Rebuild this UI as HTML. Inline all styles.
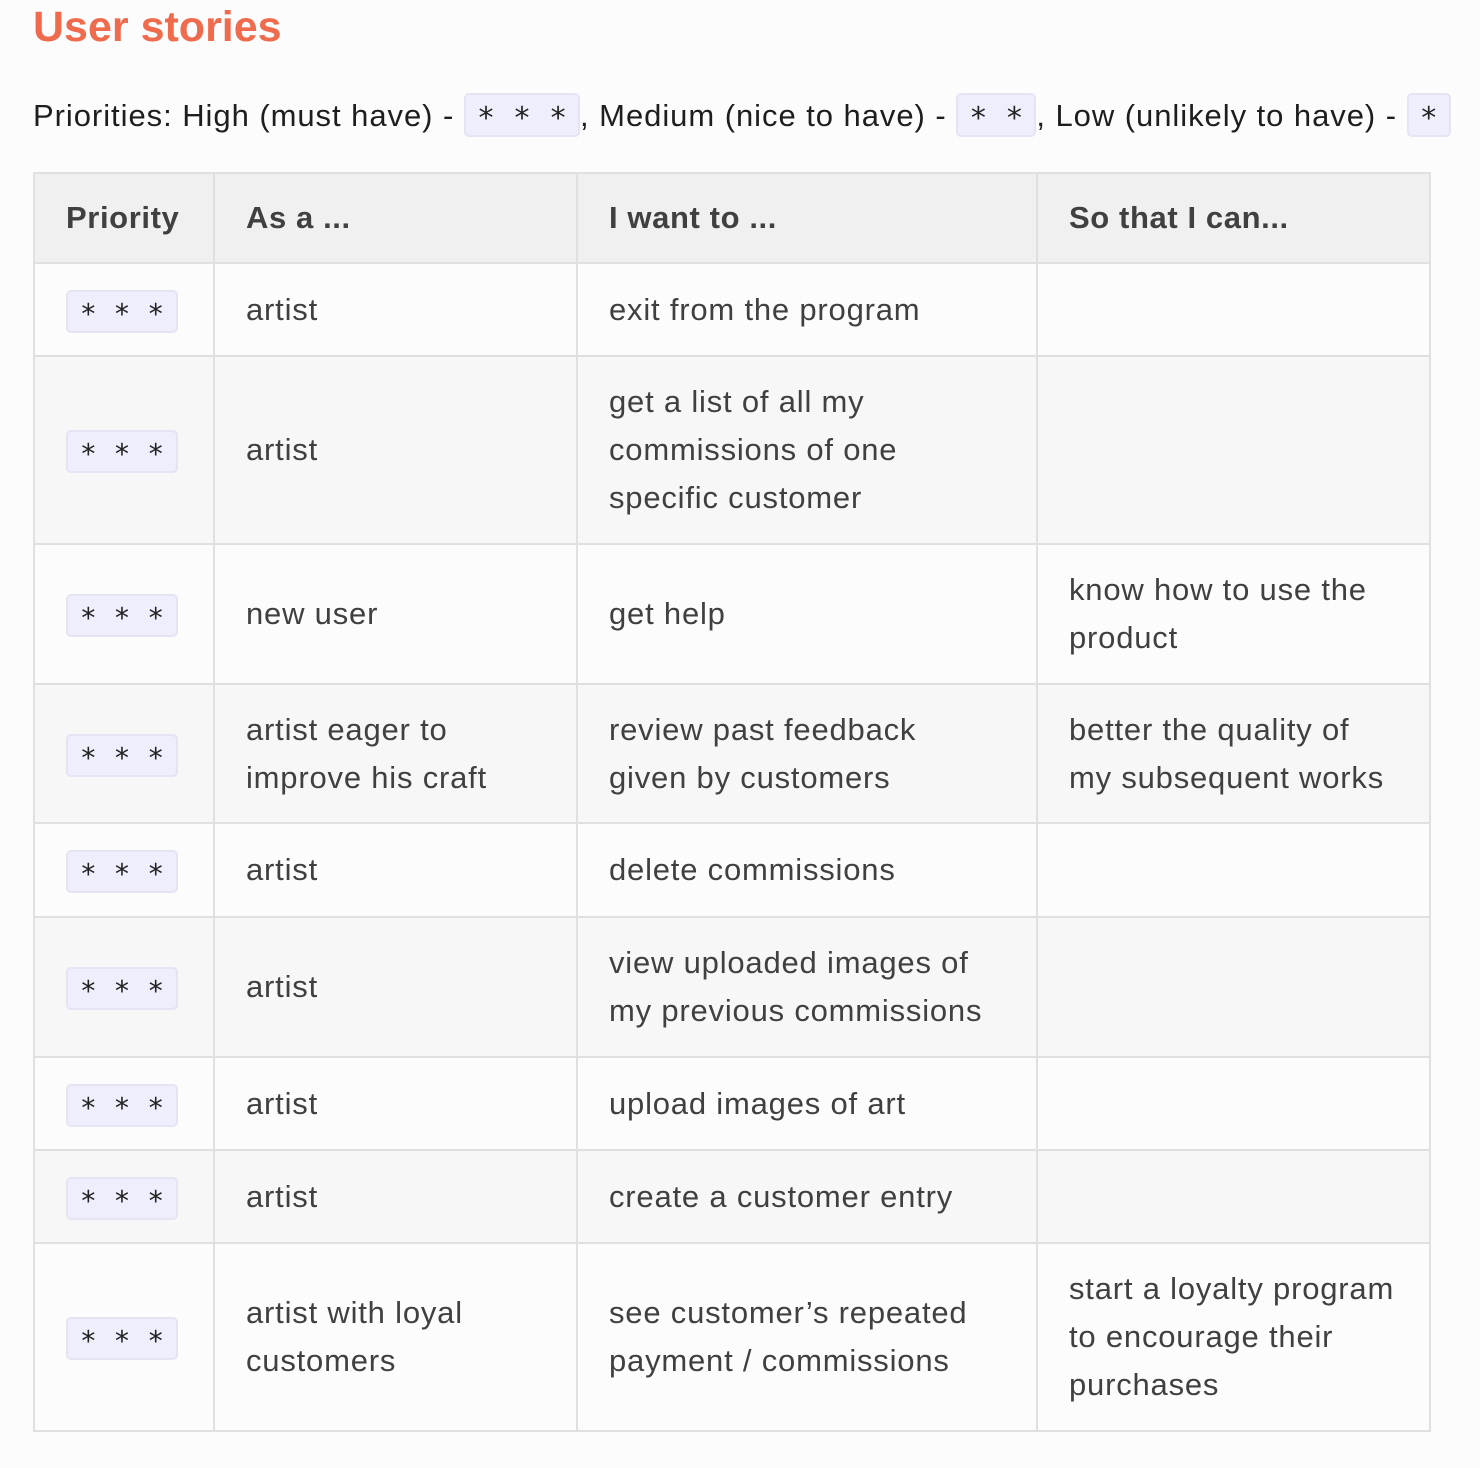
<!DOCTYPE html>
<html><head><meta charset="utf-8"><style>
body{margin:0;background:#fcfcfc;font-family:"Liberation Sans",sans-serif;width:1480px;height:1468px;overflow:hidden}
h1{position:absolute;left:33px;top:0;margin:0;font-size:43px;line-height:54px;color:#ee6c4d;font-weight:bold}
p{position:absolute;left:33px;top:94px;margin:0;font-size:31px;letter-spacing:0.95px;line-height:44px;color:#1e1e1e;white-space:nowrap}
code{font-family:"Liberation Mono",monospace;font-size:30px;letter-spacing:0;background:#eeeefc;border:2px solid #e4e4f2;border-radius:5px;padding:0 11px;color:#222;display:inline-block;line-height:40px;vertical-align:middle;margin-top:-6px}
table{position:absolute;left:33px;top:172px;border-collapse:collapse;table-layout:fixed;width:1396px}
td,th{border:2px solid #e0e0e0;padding:0 0 0 31px;font-size:31px;letter-spacing:0.8px;line-height:48px;color:#404040;text-align:left;vertical-align:middle;white-space:nowrap}
th{background:#f0f0f0;font-weight:bold;height:88px;letter-spacing:0.6px}
tr:nth-child(odd) td{background:#f7f7f7}
td{background:#fcfcfc}
td code{font-size:28px;line-height:39px;padding:0 12px;margin-top:0}
</style></head><body>
<h1>User stories</h1>
<p>Priorities: High (must have) - <code>∗ ∗ ∗</code>, Medium (nice to have) - <code>∗ ∗</code>, Low (unlikely to have) - <code>∗</code></p>
<table>
<colgroup><col style="width:180px"><col style="width:363px"><col style="width:460px"><col style="width:393px"></colgroup>
<tr><th>Priority</th><th>As a ...</th><th>I want to ...</th><th>So that I can...</th></tr>
<tr style="height:93px"><td><code>∗ ∗ ∗</code></td><td>artist</td><td>exit from the program</td><td></td></tr>
<tr style="height:188px"><td><code>∗ ∗ ∗</code></td><td>artist</td><td>get a list of all my<br>commissions of one<br>specific customer</td><td></td></tr>
<tr style="height:140px"><td><code>∗ ∗ ∗</code></td><td>new user</td><td>get help</td><td>know how to use the<br>product</td></tr>
<tr style="height:139px"><td><code>∗ ∗ ∗</code></td><td>artist eager to<br>improve his craft</td><td>review past feedback<br>given by customers</td><td>better the quality of<br>my subsequent works</td></tr>
<tr style="height:94px"><td><code>∗ ∗ ∗</code></td><td>artist</td><td>delete commissions</td><td></td></tr>
<tr style="height:140px"><td><code>∗ ∗ ∗</code></td><td>artist</td><td>view uploaded images of<br>my previous commissions</td><td></td></tr>
<tr style="height:93px"><td><code>∗ ∗ ∗</code></td><td>artist</td><td>upload images of art</td><td></td></tr>
<tr style="height:93px"><td><code>∗ ∗ ∗</code></td><td>artist</td><td>create a customer entry</td><td></td></tr>
<tr style="height:188px"><td><code>∗ ∗ ∗</code></td><td>artist with loyal<br>customers</td><td>see customer’s repeated<br>payment / commissions</td><td>start a loyalty program<br>to encourage their<br>purchases</td></tr>
</table>
</body></html>
